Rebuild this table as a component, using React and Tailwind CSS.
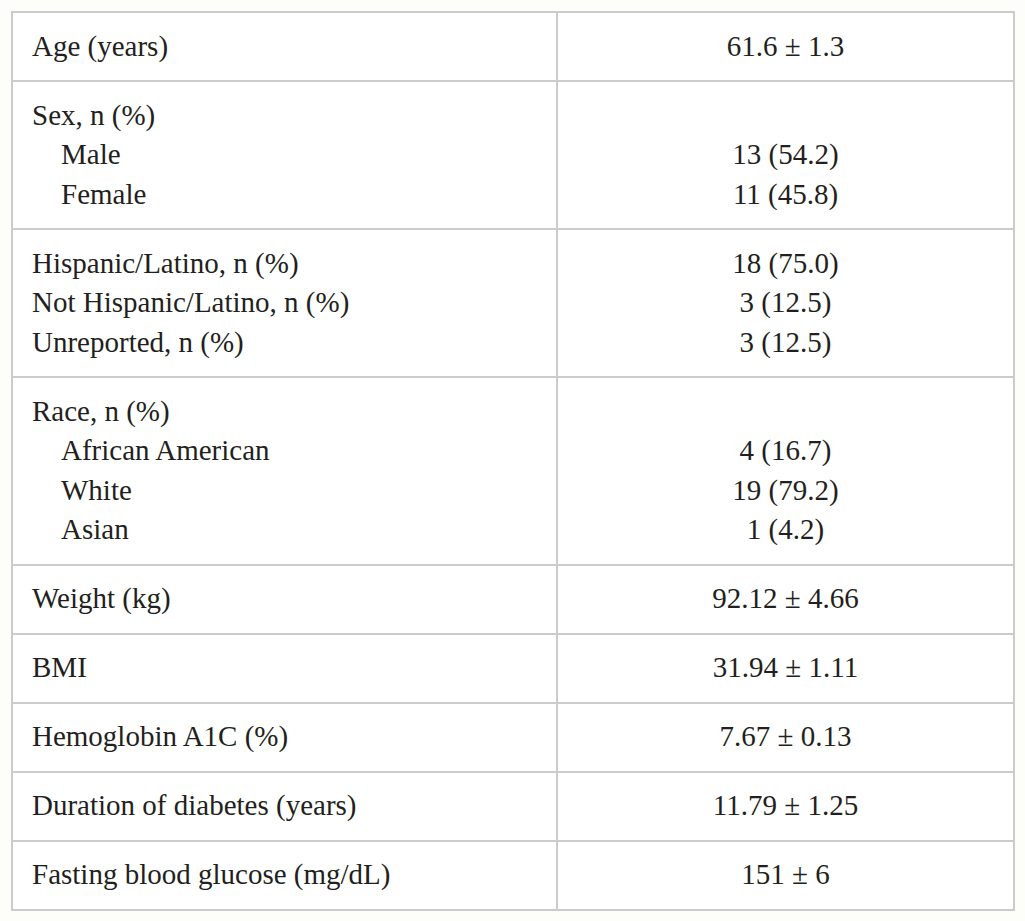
import React from 'react';

const rows = [
  { labels: [{ t: 'Age (years)' }], values: ['61.6 ± 1.3'] },
  {
    labels: [{ t: 'Sex, n (%)' }, { t: 'Male', sub: true }, { t: 'Female', sub: true }],
    values: ['', '13 (54.2)', '11 (45.8)'],
  },
  {
    labels: [
      { t: 'Hispanic/Latino, n (%)' },
      { t: 'Not Hispanic/Latino, n (%)' },
      { t: 'Unreported, n (%)' },
    ],
    values: ['18 (75.0)', '3 (12.5)', '3 (12.5)'],
  },
  {
    labels: [
      { t: 'Race, n (%)' },
      { t: 'African American', sub: true },
      { t: 'White', sub: true },
      { t: 'Asian', sub: true },
    ],
    values: ['', '4 (16.7)', '19 (79.2)', '1 (4.2)'],
  },
  { labels: [{ t: 'Weight (kg)' }], values: ['92.12 ± 4.66'] },
  { labels: [{ t: 'BMI' }], values: ['31.94 ± 1.11'] },
  { labels: [{ t: 'Hemoglobin A1C (%)' }], values: ['7.67 ± 0.13'] },
  { labels: [{ t: 'Duration of diabetes (years)' }], values: ['11.79 ± 1.25'] },
  { labels: [{ t: 'Fasting blood glucose (mg/dL)' }], values: ['151 ± 6'] },
];

export default function App() {
  return (
    <div className="w-[1025px] h-[921px] bg-[#fdfdf9] pt-[11px] pl-[11px]">
      <table
        className="w-[1004px] bg-white border-collapse text-[#231f20] text-[29px] leading-[39.5px]"
        style={{ fontFamily: '"Liberation Serif", "Times New Roman", serif' }}
      >
        <tbody>
          {rows.map((row, i) => (
            <tr key={i}>
              <td className="w-[545px] border-2 border-[#cbcbcb] pl-[19px] py-[13.75px] align-top">
                {row.labels.map((l, j) => (
                  <div key={j} className={l.sub ? 'pl-[29px]' : ''}>
                    {l.t}
                  </div>
                ))}
              </td>
              <td className="border-2 border-[#cbcbcb] py-[13.75px] text-center align-top">
                {row.values.map((v, j) => (
                  <div key={j} className="h-[39.5px]">
                    {v}
                  </div>
                ))}
              </td>
            </tr>
          ))}
        </tbody>
      </table>
    </div>
  );
}
